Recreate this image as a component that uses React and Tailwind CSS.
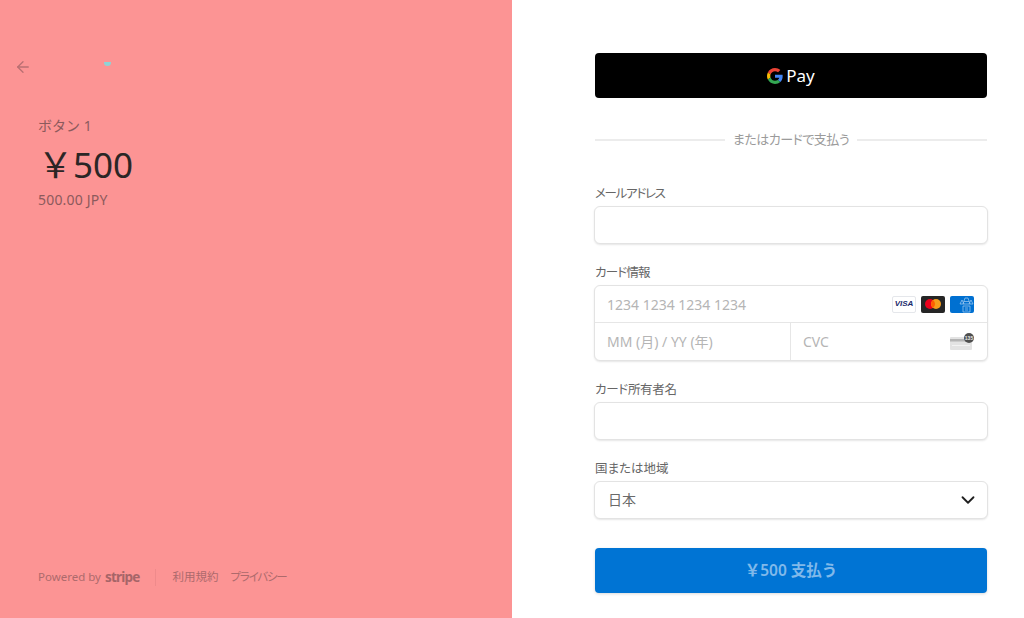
import { ArrowLeft, ChevronDown } from 'lucide-react';

const font = 'font-["Noto_Sans","Noto_Sans_CJK_JP",sans-serif] [font-feature-settings:"palt"]';

const GoogleG = () => (
  <svg width="16" height="16" viewBox="0 0 48 48">
    <path fill="#EA4335" d="M24 9.5c3.5 0 6.7 1.2 9.2 3.6l6.9-6.9C35.9 2.4 30.5 0 24 0 14.6 0 6.5 5.4 2.6 13.2l8 6.2C12.5 13.6 17.8 9.5 24 9.5z" />
    <path fill="#4285F4" d="M47 24.5c0-1.6-.1-3.1-.4-4.5H24v9h12.9c-.6 3-2.2 5.5-4.7 7.2l7.7 6C44.400 38 47 31.800 47 24.500z" />
    <path fill="#FBBC05" d="M10.600 28.600C10.100 27.200 9.800 25.600 9.800 24s.3-3.200.8-4.600l-8-6.200C1 16.400 0 20.100 0 24s1 7.600 2.600 10.800l8-6.200z" />
    <path fill="#34A853" d="M24 48c6.500 0 11.900-2.100 15.900-5.800l-7.700-6c-2.200 1.500-4.900 2.300-8.200 2.300-6.200 0-11.500-4.100-13.400-9.900l-8 6.200C6.500 42.600 14.600 48 24 48z" />
  </svg>
);

const VisaIcon = () => (
  <div className="w-6 h-[17px] bg-white border border-gray-200 rounded-[2px] flex items-center justify-center">
    <span className='text-[8px] leading-none font-bold italic text-[#1a2a6c] font-["Liberation_Sans",sans-serif]'>VISA</span>
  </div>
);

const MastercardIcon = () => (
  <div className="w-6 h-[17px] bg-[#252525] rounded-[2px] flex items-center justify-center">
    <svg width="18" height="12" viewBox="0 0 18 12">
      <circle cx="6" cy="6" r="5" fill="#eb001b" />
      <circle cx="12" cy="6" r="5" fill="#f79e1b" />
      <path d="M9 2a5 5 0 0 1 0 8 5 5 0 0 1 0-8z" fill="#ff5f00" />
    </svg>
  </div>
);

const AmexIcon = () => (
  <div className="w-6 h-[17px] bg-[#0070d1] rounded-[2px] flex items-center justify-end overflow-hidden">
    <svg width="15" height="17" viewBox="0 0 15 17" fill="none" stroke="#a6cdf0" strokeWidth="0.7">
      <path d="M4 8 6 2h3l2 6M1 8l2-4 2 4M10 8l2-4 2 4M1 8h13M5 5.500h5" />
      <path d="M4 10h7v6H4zM6 12h3M6 14h3" />
    </svg>
  </div>
);

const CvcIcon = () => (
  <svg width="26" height="17" viewBox="0 0 26 17">
    <rect x="1" y="4" width="22" height="13" rx="1" fill="#e3e3e3" />
    <rect x="1" y="6" width="22" height="2.500" fill="#b4b4b4" />
    <rect x="3" y="12" width="18" height="1" fill="#f3f3f3" />
    <circle cx="20" cy="5" r="5" fill="#4f4f4f" />
    <text x="20" y="6.800" textAnchor="middle" fontSize="5" fontWeight="700" fill="#e8e8e8" fontFamily="Liberation Sans">135</text>
  </svg>
);

const Label = ({ children, className = '' }) => (
  <div className={`h-[13px] pt-0.5 mb-1.5 flex items-center text-[12.500px] text-[#666666] ${className}`}>{children}</div>
);

const inputBox = 'h-[38px] -mx-px rounded-md bg-white border border-[#e3e3e3] shadow-[0_1px_2px_rgba(0,0,0,0.1)]';

const App = () => {
  return (
    <div className={`w-[1024px] h-[618px] flex overflow-hidden bg-white ${font}`}>
      <div className="w-[512px] h-full bg-[#fc9494] flex flex-col">
        <div className="h-[75px] pt-[58px] pl-[14px] flex items-start relative">
          <ArrowLeft className="w-[18px] h-[18px] text-[#b96f72]" strokeWidth={1.75} />
          <div className="absolute left-[104px] top-[62px] w-[7px] h-[4px] rounded-b-full bg-[#8fd3d6]" />
        </div>
        <div className="pl-[38px] pt-[41px]">
          <div className="text-sm leading-5 text-[#8c5a5c] [font-feature-settings:normal]">ボタン 1</div>
          <div className="text-[35px] leading-[46px] mt-[6px] text-[#2b2626] [font-feature-settings:normal]">￥500</div>
          <div className="text-sm leading-5 mt-[2px] tracking-[0.2px] text-[#8c5a5c]">500.00 JPY</div>
        </div>
        <div className="mt-auto mb-[32px] pl-[38px] flex items-center h-[18px] text-[11.500px] text-[#ad6a6c]">
          <span>Powered by</span>
          <span className="ml-1 text-[13.500px] font-bold tracking-[-0.8px] text-[#a66568]">stripe</span>
          <div className="w-px h-[17px] bg-[#ef8a8b] ml-[15px]" />
          <span className="ml-[17px]">利用規約</span>
          <span className="ml-3 tracking-[-1.2px]">プライバシー</span>
        </div>
      </div>

      <div className="w-[512px] h-full pl-[83px] pr-[37px] pt-[53px]">
        <div className="h-[45px] rounded bg-black flex items-center justify-center gap-[3px]">
          <GoogleG />
          <span className="text-[17px] leading-none text-white">Pay</span>
        </div>

        <div className="h-3.5 mt-[35px] flex items-center gap-[7px]">
          <div className="flex-1 h-0.5 bg-[#ececec]" />
          <span className="px-[1px] text-[13px] tracking-[-0.5px] text-[#9b9b9b]">またはカードで支払う</span>
          <div className="flex-1 h-0.5 bg-[#ececec]" />
        </div>

        <div className="mt-[40px]">
          <Label className="tracking-[-1.300px]">メールアドレス</Label>
          <div className={inputBox} />
        </div>

        <div className="mt-[22px]">
          <Label className="tracking-[-0.8px]">カード情報</Label>
          <div className="-mx-px rounded-md bg-white border border-[#e3e3e3] shadow-[0_1px_2px_rgba(0,0,0,0.1)]">
            <div className="h-[37px] pl-3 pr-[13px] flex items-center justify-between border-b border-[#e6e6e6]">
              <span className="text-sm text-[#b5b5b5] pt-px">1234 1234 1234 1234</span>
              <div className="flex gap-[5px]">
                <VisaIcon />
                <MastercardIcon />
                <AmexIcon />
              </div>
            </div>
            <div className="h-[37px] flex">
              <div className="w-[196px] pl-3 flex items-center border-r border-[#e6e6e6]">
                <span className="text-sm text-[#b5b5b5] pt-px">MM (月) / YY (年)</span>
              </div>
              <div className="flex-1 pl-3 pr-3 flex items-center justify-between">
                <span className="text-sm text-[#b5b5b5] pt-px">CVC</span>
                <CvcIcon />
              </div>
            </div>
          </div>
        </div>

        <div className="mt-[22px]">
          <Label className="tracking-[-0.3px]">カード所有者名</Label>
          <div className={inputBox} />
        </div>

        <div className="mt-[22px]">
          <Label>国または地域</Label>
          <div className={`${inputBox} pl-[13px] pr-[8px] flex items-center justify-between`}>
            <span className="text-sm text-[#6a6a6a]">日本</span>
            <ChevronDown className="w-[22px] h-[22px] text-[#1f1f1f]" strokeWidth={2} />
          </div>
        </div>

        <div className="h-[45px] mt-[29px] rounded bg-[#0074d4] flex items-center justify-center shadow-[0_1px_3px_rgba(0,0,0,0.15)]">
          <span className="text-[15.500px] font-semibold text-[#80b9ea] [font-feature-settings:normal]">￥500 支払う</span>
        </div>
      </div>
    </div>
  );
};

export default App;
